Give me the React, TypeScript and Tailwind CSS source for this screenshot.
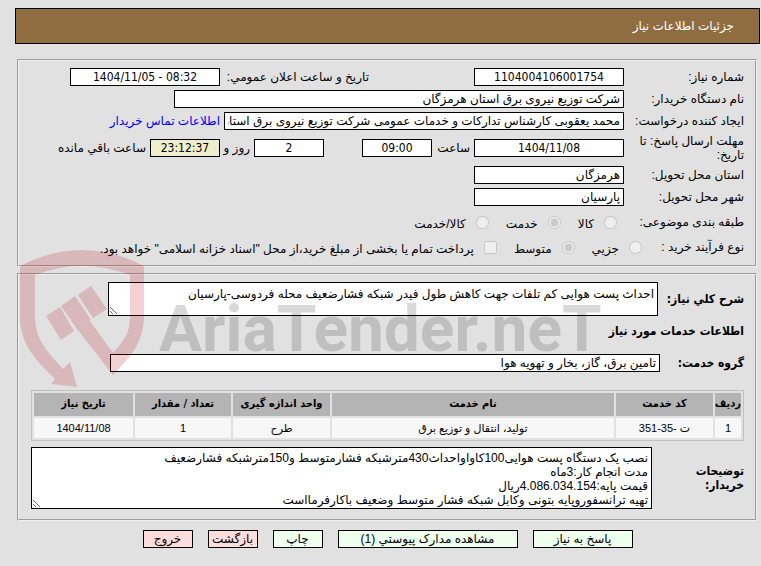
import type { ComponentProps, ReactNode } from "react";

const BOX = "border border-black px-[3px] text-black outline-none";
const CONDENSED = "font-['DejaVu_Sans_Condensed','DejaVu_Sans',sans-serif]";
const NUMERIC = `text-center ${CONDENSED}`;
const PANEL =
  "mr-[3px] ml-[2px] border-2 border-[#f0f0f0] pr-[11px] pl-3 [border-style:groove]";

function Field({ className, ...props }: ComponentProps<"input">) {
  return <input readOnly className={`h-[18px] ${BOX} ${className}`} {...props} />;
}

function Row({ label, htmlFor, className = "h-[22px]", labelClass = "w-[120px]", children }: {
  label: string;
  htmlFor?: string;
  className?: string;
  labelClass?: string;
  children: ReactNode;
}) {
  return (
    <div className={`flex items-center ${className}`}>
      <label htmlFor={htmlFor} className={`shrink-0 leading-[14px] ${labelClass}`}>
        {label}
      </label>
      {children}
    </div>
  );
}

function Choice({ label, ...props }: ComponentProps<"input"> & { label: string }) {
  return (
    <label className="flex items-center gap-[10px] whitespace-nowrap">
      <input disabled className="size-[13px] shrink-0" {...props} />
      <span className="pt-1">{label}</span>
    </label>
  );
}

const columns = [
  { title: "ردیف", value: "1", width: "w-[26px]" },
  { title: "کد خدمت", value: "ت -35-351", width: "w-[97px]" },
  { title: "نام خدمت", value: "تولید، انتقال و توزیع برق", width: "" },
  { title: "واحد اندازه گیری", value: "طرح", width: "w-[97px]" },
  { title: "تعداد / مقدار", value: "1", width: "w-[96px]" },
  { title: "تاریخ نیاز", value: "1404/11/08", width: "w-[99px]" },
];

const actions = [
  { label: "پاسخ به نیاز", style: "w-[100px] bg-[#eeffee]" },
  { label: "مشاهده مدارک پیوستي (1)", style: "w-[180px] bg-[#eeffee]" },
  { label: "چاپ", style: "w-[50px] bg-[#eeffee]" },
  { label: "بازگشت", style: "w-[50px] bg-[#ffdddd]" },
  { label: "خروج", style: "w-[50px] bg-[#ffdddd]" },
];

const notes = `نصب یک دستگاه پست هوایی100کاواواحداث430مترشبکه فشارمتوسط و150مترشبکه فشارضعیف
مدت انجام کار:3ماه
قیمت پایه:4.086.034.154ریال
تهیه ترانسفوروپایه بتونی وکابل شبکه فشار متوسط وضعیف باکارفرمااست`;

function Watermark() {
  return (
    <svg
      aria-hidden
      viewBox="0 0 620 150"
      className="pointer-events-none absolute top-[245px] left-[15px] h-[150px] w-[620px]"
    >
      <g fill="#b40a14" fillOpacity="0.19">
        <path d="M5 21Q67 -11 129 21V70C129 98 115 112 98 130L62 84L75 76L98 108C112 92 115 86 115 70V30Q67 12 20 30V70C20 94 30 104 48 124L55 117L62 142L36 139L40 134C15 110 5 96 5 70Z" />
        <path d="M31 71L45 62L59 86L46 95ZM46 61L60 51L76 75L62 84ZM63 50L76 41L92 64L78 73Z" />
      </g>
      <text
        x="144"
        y="106"
        direction="ltr"
        fontSize="64"
        fontWeight="700"
        fill="#000000"
        fillOpacity="0.15"
        fontFamily="Roboto,'Liberation Sans',sans-serif"
      >
        AriaTender.neT
      </text>
    </svg>
  );
}

export default function App() {
  return (
    <main
      dir="rtl"
      className="relative min-h-screen bg-[#e1e1e1] pt-2 pr-px pb-[18px] pl-[15px] font-['Liberation_Sans','DejaVu_Sans',sans-serif] text-[12px] text-black"
    >
      <h1 className="flex h-9 items-center border border-black bg-[#8f6d40] px-[25px] text-white">
        جزئیات اطلاعات نیاز
      </h1>

      <section className={`mt-[15px] pt-[5px] pb-[7px] ${PANEL}`}>
        <Row label="شماره نیاز:" htmlFor="number">
          <Field id="number" defaultValue="1104004106001754" className={`w-[150px] bg-white ${NUMERIC}`} />
          <label htmlFor="announced" className="ms-[105px] w-[149px]">
            تاریخ و ساعت اعلان عمومي:
          </label>
          <Field id="announced" dir="ltr" defaultValue="1404/11/05 - 08:32" className={`w-[150px] bg-white ${NUMERIC}`} />
        </Row>
        <Row label="نام دستگاه خریدار:" htmlFor="buyer">
          <Field id="buyer" defaultValue="شرکت توزیع نیروی برق استان هرمزگان" className="w-[450px] bg-white" />
        </Row>
        <Row label="ایجاد کننده درخواست:" htmlFor="creator">
          <Field id="creator" defaultValue="محمد یعقوبی کارشناس تدارکات و خدمات عمومی شرکت توزیع نیروی برق استان هرمزگان" className="w-[400px] bg-white" />
          <a href="#contact" className="ms-1 text-[#0000ee]">اطلاعات تماس خریدار</a>
        </Row>
        <Row label="مهلت ارسال پاسخ: تا تاریخ:" htmlFor="deadline" className="h-8" labelClass="w-[120px] pe-2">
          <Field id="deadline" defaultValue="1404/11/08" className={`w-[150px] bg-white ${NUMERIC}`} />
          <label htmlFor="hour" className="w-[42px] ps-1">ساعت</label>
          <Field id="hour" defaultValue="09:00" className={`w-[70px] bg-white ${NUMERIC}`} />
          <Field id="days" defaultValue="2" className={`ms-[38px] w-[70px] bg-white ${NUMERIC}`} />
          <label htmlFor="days" className="w-[34px] ps-1">روز و</label>
          <Field id="left" defaultValue="23:12:37" className={`w-[70px] bg-[#eeeecc] ${NUMERIC}`} />
          <label htmlFor="left" className="ms-1">ساعت باقي مانده</label>
        </Row>
        <Row label="استان محل تحویل:" htmlFor="province">
          <Field id="province" defaultValue="هرمزگان" className="w-[150px] bg-white" />
        </Row>
        <Row label="شهر محل تحویل:" htmlFor="city">
          <Field id="city" defaultValue="پارسیان" className="w-[150px] bg-white" />
        </Row>
        <Row label="طبقه بندی موضوعی:" className="h-7">
          <div className="flex gap-[17px] ps-[7px]">
            <Choice type="radio" name="kind" label="کالا" />
            <Choice type="radio" name="kind" label="خدمت" defaultChecked />
            <Choice type="radio" name="kind" label="کالا/خدمت" />
          </div>
        </Row>
        <Row label="نوع فرآیند خرید :" labelClass="w-[102px]">
          <div className="flex gap-[17px]">
            <Choice type="radio" name="process" label="جزیي" />
            <Choice type="radio" name="process" label="متوسط" defaultChecked />
            <Choice type="checkbox" label={'پرداخت تمام یا بخشی از مبلغ خرید،از محل "اسناد خزانه اسلامی" خواهد بود.'} />
          </div>
        </Row>
      </section>

      <section className={`mt-[6px] pt-[7px] pb-[10px] ${PANEL}`}>
        <Row label="شرح کلي نیاز:" htmlFor="summary" className="" labelClass={`w-[86px] font-bold ${CONDENSED}`}>
          <textarea
            id="summary"
            readOnly
            defaultValue="احداث پست هوایی کم تلفات جهت کاهش طول فیدر شبکه فشارضعیف محله فردوسی-پارسیان"
            className={`h-[34px] w-[550px] bg-white pt-1 leading-[14px] ${BOX}`}
          />
        </Row>
        <h2 className={`flex h-[29px] items-center font-bold ${CONDENSED}`}>اطلاعات خدمات مورد نیاز</h2>
        <Row label="گروه خدمت:" htmlFor="group" className="mt-[9px]" labelClass={`w-[84px] font-bold ${CONDENSED}`}>
          <Field id="group" defaultValue="تامین برق، گاز، بخار و تهویه هوا" className="w-[550px] bg-white" />
        </Row>

        <table className="mt-[18px] w-full table-fixed border-separate border-spacing-[2px] border border-[#c0c0c0] text-center text-[11px]">
          <thead>
            <tr className={`h-[23px] ${CONDENSED}`}>
              {columns.map((col) => (
                <th key={col.title} scope="col" className={`bg-[#b4b4b4] p-0 font-bold whitespace-nowrap ${col.width}`}>
                  {col.title}
                </th>
              ))}
            </tr>
          </thead>
          <tbody>
            <tr className="h-5">
              {columns.map((col) => (
                <td key={col.title} className="bg-[#f7f7f7] p-0">{col.value}</td>
              ))}
            </tr>
          </tbody>
        </table>

        <Row label="توضیحات خریدار:" htmlFor="notes" className="mt-[6px]" labelClass={`w-[92px] pe-6 font-bold ${CONDENSED}`}>
          <textarea
            id="notes"
            readOnly
            defaultValue={notes}
            className={`h-[62px] min-w-0 flex-1 bg-white pt-[3px] leading-[14px] ${BOX}`}
          />
        </Row>
      </section>

      <div className="mt-[9px] flex justify-center gap-[15px]">
        {actions.map((action) => (
          <button
            key={action.label}
            type="button"
            className={`h-[18px] border border-black leading-4 whitespace-nowrap ${action.style}`}
          >
            {action.label}
          </button>
        ))}
      </div>

      <Watermark />
    </main>
  );
}
